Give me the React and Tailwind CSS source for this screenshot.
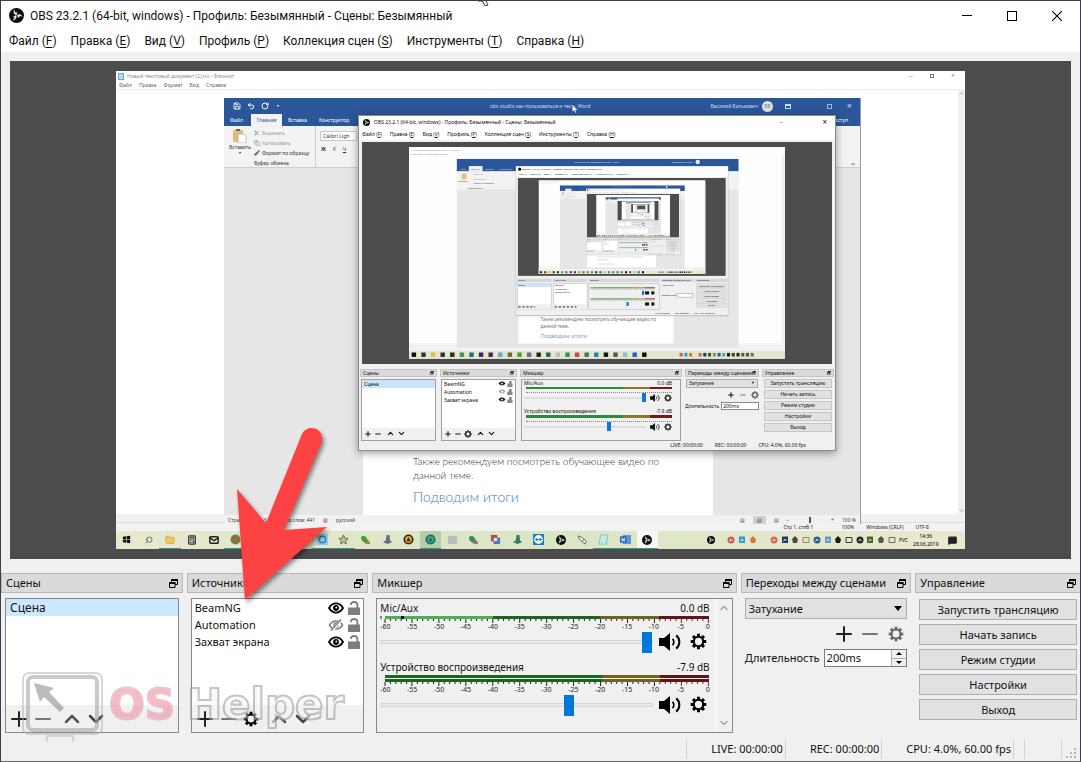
import React, { useState } from 'react';
import { ChevronUp, ChevronDown, Plus, Minus, Undo2, RotateCw, Save, Search, Scissors, Copy, Brush, MessageSquare, Calculator, Mail, Folder } from 'lucide-react';

const MENU = [
  ['Файл', 'F'],
  ['Правка', 'E'],
  ['Вид', 'V'],
  ['Профиль', 'P'],
  ['Коллекция сцен', 'S'],
  ['Инструменты', 'T'],
  ['Справка', 'H'],
];

const TITLE = 'OBS 23.2.1 (64-bit, windows) - Профиль: Безымянный - Сцены: Безымянный';

const SOURCES = [
  { name: 'BeamNG', visible: true },
  { name: 'Automation', visible: false },
  { name: 'Захват экрана', visible: true },
];

const CONTROLS = ['Запустить трансляцию', 'Начать запись', 'Режим студии', 'Настройки', 'Выход'];

const DB = [-60, -55, -50, -45, -40, -35, -30, -25, -20, -15, -10, -5, 0];

const TASKS = [
  { kind: 'win', color: '#111111' },
  { kind: 'search', color: '#333333' },
  { kind: 'folder', color: '#e9b949', open: true },
  { kind: 'calc', color: '#333333' },
  { kind: 'mail', color: '#2b2b2b' },
  { kind: 'ring', color: '#3c9a55', inner: '#d94a3a', open: true },
  { kind: 'box', color: '#1b6f86' },
  { kind: 'box', color: '#3b2470' },
  { kind: 'box', color: '#52206b' },
  { kind: 'cam', color: '#5fa9d6', open: true },
  { kind: 'star', color: '#6b6b3a', open: true },
  { kind: 'leaf', color: '#4c9a3c' },
  { kind: 'cone', color: '#6a6a8c' },
  { kind: 'ring', color: '#2d2414', inner: '#e2a21c' },
  { kind: 'ring', color: '#1d6b5a', inner: '#3fa58a', lit: 'bg-[#b5cda9]', open: true },
  { kind: 'box', color: '#b9bcc4' },
  { kind: 'leaf', color: '#3f8a68' },
  { kind: 'pair', color: '#c5474a', inner: '#5274b8' },
  { kind: 'cone', color: '#3f7a62' },
  { kind: 'viewer', color: '#1f7fc4' },
  { kind: 'obs', color: '#161616' },
  { kind: 'brush', color: '#555555' },
  { kind: 'note', color: '#7cc4cf', open: true },
  { kind: 'word', color: '#2b62b5', open: true },
  { kind: 'obs', color: '#0b0b0b', lit: 'bg-[#f7f8f4]', open: true },
];

const TRAY = [
  '#d2575f', '#2a9fd8', '#cf7c2f', '#e4e4d6', '#e0605a', '#1f3a66', '#4c4c44', '#8a8a78',
  '#2b5f91', '#5b9bc4', '#1c1c1c', '#3d3d30', '#26262a', '#3f6b23', '#555548', '#6b6b5c',
];

/* ---------- icons ---------- */

const Gear = ({ className }) => (
  <svg viewBox="0 0 18 18" className={className} fill="none" stroke="currentColor">
    <circle cx="9" cy="9" r="5" strokeWidth="2.3" />
    {[0, 45, 90, 135, 180, 225, 270, 315].map((a) => (
      <path key={a} d="M9 0.8V3.6" strokeWidth="3.2" transform={`rotate(${a} 9 9)`} />
    ))}
  </svg>
);

const Eye = ({ open }) =>
  open ? (
    <svg viewBox="0 0 16 12" className="h-3 w-4 text-black" fill="none" stroke="currentColor">
      <path d="M1 6C3 2.6 5.3 1.4 8 1.4S13 2.6 15 6C13 9.4 10.7 10.6 8 10.6S3 9.4 1 6Z" strokeWidth="1.8" />
      <circle cx="8" cy="6" r="2.9" fill="currentColor" stroke="none" />
      <circle cx="8.3" cy="5.5" r="0.9" fill="#fff" stroke="none" />
    </svg>
  ) : (
    <svg viewBox="0 0 16 12" className="h-3 w-4 text-[#7d7d7d]" fill="none" stroke="currentColor">
      <path d="M1.4 6C3.2 3.2 5.4 2 8 2S12.8 3.2 14.6 6C12.8 8.8 10.6 10 8 10S3.2 8.8 1.4 6Z" strokeWidth="1.4" />
      <circle cx="8" cy="6" r="2" strokeWidth="1.5" />
      <path d="M3.5 11.8 13.5 0.6" stroke="#fff" strokeWidth="3" />
      <path d="M3 11.4 13 0.4" strokeWidth="1.5" />
    </svg>
  );

const Unlocked = () => (
  <svg viewBox="0 0 12 14" className="h-[14px] w-3 text-[#7d7d7d]" fill="none" stroke="currentColor">
    <path d="M2.8 3.8C3 1.8 4.2 1 6 1C8.2 1 9.4 2.2 9.4 4V7" strokeWidth="1.8" />
    <path d="M0 6.5H12V14H0Z" fill="currentColor" stroke="none" />
  </svg>
);

const Speaker = ({ className }) => (
  <svg viewBox="0 0 22 18" className={className} fill="none" stroke="currentColor">
    <path d="M0 5H5L11 0V18L5 13H0Z" fill="currentColor" stroke="none" />
    <path d="M13.5 5.8C15.2 7.6 15.2 10.4 13.5 12.2" strokeWidth="1.8" />
    <path d="M17.2 2.4C21.4 5.8 21.4 12.2 17.2 15.6" strokeWidth="2" />
  </svg>
);

const Float = ({ className }) => (
  <svg viewBox="0 0 9 9" className={className} fill="none" stroke="currentColor">
    <path d="M2.5 3V0.5H8.5V5.5H6" />
    <path d="M2 1.2H9" strokeWidth="1.6" />
    <path d="M0.5 3.5H6V8.5H0.5Z" />
    <path d="M0 4.2H6.5" strokeWidth="1.6" />
  </svg>
);

const ObsMark = ({ className }) => (
  <svg viewBox="0 0 16 16" className={className} fill="none">
    <circle cx="8" cy="8" r="8" fill="#0c0c0c" />
    {[0, 120, 240].map((a) => (
      <path key={a} d="M8.2 7.4C5.6 7 4.3 4.8 5.7 2.3C5.7 4.2 6.9 5.4 9 5" fill="#e6e6e6" stroke="#e6e6e6" strokeWidth="0.5" transform={`rotate(${a} 8 8)`} />
    ))}
  </svg>
);

const TaskGlyph = ({ t }) => {
  if (t.kind === 'search') return <Search className="size-2 -scale-x-100 text-[#333]" strokeWidth={2} />;
  if (t.kind === 'calc') return <Calculator className="size-[10px] text-[#333]" strokeWidth={3} />;
  if (t.kind === 'mail') return <Mail className="size-[10px] text-[#222]" strokeWidth={3.5} />;
  if (t.kind === 'folder') return <Folder className="size-[10px] fill-[#f0c95c] text-[#d79f35]" strokeWidth={2} />;
  if (t.kind === 'obs') return <ObsMark className="size-[10px]" />;
  return (
    <svg viewBox="0 0 12 12" className="size-[11px]">
      {t.kind === 'win' && <path d="M2 3 5.6 2.5V5.7H2ZM6.2 2.4 10 2V5.7H6.2ZM2 6.3H5.6V9.5L2 9ZM6.2 6.3H10V10L6.2 9.5Z" fill={t.color} />}
      {t.kind === 'ring' && (
        <>
          <circle cx="6" cy="6" r="5.5" fill={t.color} />
          <circle cx="6" cy="6" r="3.8" fill={t.inner} />
          <path d="M6 3.5 8.2 8H3.8Z" fill={t.color} />
        </>
      )}
      {t.kind === 'box' && <path d="M1 2H11V11H1Z" fill={t.color} />}
      {t.kind === 'cam' && (
        <>
          <path d="M0 0H12V12H0Z" fill="#8ec9e6" />
          <circle cx="6" cy="6" r="3.5" fill="none" stroke="#2e7fb4" strokeWidth="1.5" />
        </>
      )}
      {t.kind === 'star' && <path d="M6 1 7.5 4.5 11 5 8.5 7.5 9 11 6 9 3 11 3.5 7.5 1 5 4.5 4.5Z" fill="#b7c19a" stroke={t.color} />}
      {t.kind === 'leaf' && (
        <>
          <path d="M1 3C5 1 7 3 8 6L11 9 6 10C3 9 1 7 1 3Z" fill={t.color} />
          <path d="M6 9H11V11H6Z" fill="#d4722f" />
        </>
      )}
      {t.kind === 'cone' && <path d="M5 1H8L9 7 11 9 6 11 1 9 4 7Z" fill={t.color} />}
      {t.kind === 'pair' && (
        <>
          <path d="M1 1H8V8H1Z" fill={t.color} />
          <path d="M4 4H11V11H4Z" fill={t.inner} />
          <circle cx="6" cy="6" r="2" fill="#f1f1f1" />
        </>
      )}
      {t.kind === 'viewer' && (
        <>
          <path d="M0 0H12V12H0Z" fill={t.color} />
          <circle cx="6" cy="6" r="4.8" fill="#fff" />
          <path d="M1.8 6 4.3 4V5.3H7.7V4L10.2 6 7.7 8V6.7H4.3V8Z" fill={t.color} />
        </>
      )}
      {t.kind === 'brush' && <path d="M1 2 6 4 10 8 9 11 5 8 3 6ZM5 8 8 6" fill="#f1f1ea" stroke={t.color} strokeWidth="0.9" />}
      {t.kind === 'note' && <path d="M3 1H11L9 11H1Z" fill="#c9e8ea" stroke={t.color} />}
      {t.kind === 'word' && (
        <>
          <path d="M3 1H12V11H3Z" fill="#5c96dd" />
          <path d="M0 2.5H7V9.5H0Z" fill={t.color} />
          <path d="M1.5 4 2.5 8 3.5 5 4.5 8 5.5 4" fill="none" stroke="#fff" strokeWidth="0.8" />
        </>
      )}
    </svg>
  );
};

/* ---------- captured desktop ---------- */

// Readable on the first nested level, only a dashed trace further in
const Label = ({ deep, x, y, size = 6, fill = '#222', anchor, children }) => {
  if (!deep) {
    return (
      <text x={x} y={y} fontSize={size} fill={fill} textAnchor={anchor} fontFamily="Noto Sans, sans-serif">
        {children}
      </text>
    );
  }
  const w = children.length * size * 0.5;
  const left = anchor === 'middle' ? x - w / 2 : x;
  return <path d={`M${left} ${y - size * 0.3}h${w}`} stroke={fill} strokeWidth={size * 0.35} strokeDasharray="3 2" opacity="0.6" />;
};

// One level of the "screen inside the screen" feedback
const DesktopArt = ({ level }) => {
  const deep = level > 1;
  return (
    <g>
      <rect width="849" height="478" fill="#fefefe" />
      <Label deep={deep} x={9} y={8} size={5} fill="#8a8a8a">Новый текстовый документ (2).txt – Блокнот</Label>
      <Label deep={deep} x={3} y={17} size={5} fill="#8a8a8a">Файл   Правка   Формат   Вид   Справка</Label>
      <rect x="842" y="19" width="7" height="424" fill="#f0f0f0" />
      <rect y="443" width="849" height="17" fill="#f2f2f2" />

      {/* word processor */}
      <rect x="108" y="27" width="636" height="426" fill="#e6e6e6" />
      <rect x="108" y="27" width="636" height="28" fill="#2a579a" />
      <rect x="135" y="43" width="31" height="12" fill="#f3f3f3" />
      <rect x="108" y="55" width="636" height="41" fill="#f3f3f3" />
      <Label deep={deep} x={374} y={36} size={5} fill="#dce6f5">obs studio как пользоваться и тест - Word</Label>
      <Label deep={deep} x={594} y={36} size={5} fill="#dce6f5">Василий Батькович</Label>
      <Label deep={deep} x={115} y={51} size={5} fill="#dce6f5">Файл</Label>
      <Label deep={deep} x={140} y={51} size={5} fill="#2a579a">Главная</Label>
      <Label deep={deep} x={172} y={51} size={5} fill="#dce6f5">Вставка</Label>
      <Label deep={deep} x={203} y={51} size={5} fill="#dce6f5">Конструктор</Label>
      <circle cx="652" cy="34" r="5" fill="#e8e8e8" />
      <rect x="119" y="60" width="11" height="13" fill="#e8c27a" />
      <Label deep={deep} x={112} y={79} size={5} fill="#444">Вставить</Label>
      <Label deep={deep} x={145} y={64} size={5} fill="#999">Вырезать</Label>
      <Label deep={deep} x={145} y={74} size={5} fill="#999">Копировать</Label>
      <Label deep={deep} x={145} y={84} size={5} fill="#444">Формат по образцу</Label>
      <Label deep={deep} x={133} y={94} size={5} fill="#444">Буфер обмена</Label>
      <rect x="247" y="96" width="350" height="348" fill="#fff" />
      <Label deep={deep} x={297} y={394} size={10} fill="#777">Также рекомендуем посмотреть обучающее видео по</Label>
      <Label deep={deep} x={297} y={408} size={10} fill="#777">данной теме.</Label>
      <Label deep={deep} x={297} y={431} size={13} fill="#7f9fcc">Подводим итоги</Label>

      {/* taskbar */}
      <rect y="460" width="849" height="18" fill="#e3e8cd" />
      {TASKS.map((t, i) => (
        <rect key={i} x={6 + i * 21.68} y="464" width="10" height="10" fill={t.color} />
      ))}
      {TRAY.map((c, i) => (
        <rect key={i} x={611 + i * 10.7} y="465" width="7" height="8" fill={c} />
      ))}

      {/* recorder window */}
      <rect x="241" y="43" width="480" height="339" fill="#b4b4b4" />
      <rect x="242" y="44" width="478" height="336" fill="#f0f0f0" />
      <rect x="242" y="44" width="478" height="24" fill="#fff" />
      <circle cx="250" cy="50" r="3.5" fill="#000" />
      <Label deep={deep} x={255} y={52} size={5}>{TITLE}</Label>
      {MENU.map(([name, key], i) => (
        <Label key={key} deep={deep} x={[246, 273, 305, 329, 367, 421, 469][i]} y={64} size={5}>{`${name} (${key})`}</Label>
      ))}
      <rect x="246" y="70" width="469" height="221" fill="#4c4c4c" />
      {[[243, 79], [324, 78], [405, 161], [570, 74], [646, 73]].map(([x, w]) => (
        <rect key={x} x={x} y="297" width={w} height="8" fill="#d8d8d8" />
      ))}
      <rect x="245" y="308" width="76" height="59" fill="#fff" stroke="#aaa" />
      <rect x="245" y="308" width="76" height="8" fill="#cce4f7" />
      <rect x="326" y="308" width="76" height="59" fill="#fff" stroke="#aaa" />
      <rect x="246" y="355" width="75" height="12" fill="#f0f0f0" />
      <rect x="327" y="355" width="75" height="12" fill="#f0f0f0" />
      <rect x="406" y="308" width="159" height="59" fill="#f0f0f0" stroke="#aaa" />
      <Label deep={deep} x={247} y={303} size={5}>Сцены</Label>
      <Label deep={deep} x={328} y={303} size={5}>Источники</Label>
      <Label deep={deep} x={408} y={303} size={5}>Микшер</Label>
      <Label deep={deep} x={571} y={303} size={5}>Переходы между сценами</Label>
      <Label deep={deep} x={649} y={303} size={5}>Управление</Label>
      <Label deep={deep} x={247} y={314} size={5}>Сцена</Label>
      {SOURCES.map((s, i) => (
        <Label key={s.name} deep={deep} x={329} y={314 + i * 8} size={5}>{s.name}</Label>
      ))}
      <Label deep={deep} x={573} y={315} size={5}>Затухание</Label>
      <Label deep={deep} x={571} y={337} size={5}>Длительность</Label>
      <rect x="605" y="331" width="36" height="8" fill="#fff" stroke="#888" />
      <path d="M247 361H285M329 361H378" stroke="#444" strokeWidth="3" strokeDasharray="5 4" />
      <Label deep={deep} x={556} y={377} size={5}>LIVE: 00:00:00</Label>
      <Label deep={deep} x={600} y={377} size={5}>REC: 00:00:00</Label>
      <Label deep={deep} x={643} y={377} size={5}>CPU: 4.0%, 60.00 fps</Label>
      {[317, 342].map((y, i) => (
        <g key={y}>
          <rect x="410" y={y} width="95" height="2" fill="#2f8a3a" />
          <rect x="505" y={y} width="28" height="2" fill="#8a7a2a" />
          <rect x="533" y={y} width="22" height="2" fill="#6b1c1c" />
          <path d={`M410 ${y + 4}H555`} stroke="#555" strokeDasharray="2 2" />
          <rect x={i ? 491 : 526} y={y + 8} width="5" height="9" fill="#0a78d6" />
          <rect x="533" y={y + 9} width="9" height="7" fill="#111" />
          <rect x="547" y={y + 9} width="7" height="7" fill="#111" />
        </g>
      ))}
      {CONTROLS.map((c, i) => (
        <g key={c}>
          <rect x="649" y={309 + i * 11} width="68" height="9" fill="#e1e1e1" stroke="#adadad" strokeWidth="0.5" />
          <Label deep={deep} x={683} y={316 + i * 11} size={5} anchor="middle">{c}</Label>
        </g>
      ))}
      {level < 5 && (
        <g transform="translate(293 75) scale(0.443)">
          <DesktopArt level={level + 1} />
        </g>
      )}
    </g>
  );
};

const MiniHead = ({ children }) => (
  <div className="flex h-2 items-center justify-between border border-[#c4c4c4] bg-[#dadada] px-[2px]">
    <span className="whitespace-nowrap">{children}</span>
    <Float className="size-1 text-black" />
  </div>
);

const MiniTools = ({ gear }) => (
  <div className="mt-auto flex h-3 items-center gap-[2px] bg-[#f0f0f0] px-[2px]">
    <Plus className="size-2" strokeWidth={3} />
    <Minus className="size-2" strokeWidth={3} />
    {gear && <Gear className="size-2" />}
    <ChevronUp className="ml-[2px] size-[9px]" strokeWidth={3} />
    <ChevronDown className="size-[9px]" strokeWidth={3} />
  </div>
);

const MiniChannel = ({ name, level, db, double }) => (
  <div className="h-[28px] shrink-0">
    <div className="flex h-[7px] items-center justify-between">
      <span>{name}</span>
      <span>{db}</span>
    </div>
    <div className={`ml-[2px] flex ${double ? 'h-[3px]' : 'h-[2px]'}`}>
      <span className="w-2/3 bg-[#2f8a3a]" />
      <span className="w-[18%] bg-[#8a7a2a]" />
      <span className="flex-1 bg-[#6b1c1c]" />
    </div>
    <div className="ml-[2px] h-1 border-b border-dotted border-[#888]" />
    <div className="flex h-[10px] items-center gap-1">
      <div className="relative h-[2px] w-[124px] bg-[#dedede]">
        <span className={`absolute -top-1 h-[9px] w-1 bg-[#0a78d6] ${level}`} />
      </div>
      <Speaker className="h-2 w-[10px]" />
      <Gear className="size-2" />
    </div>
  </div>
);

const MiniObs = () => (
  <div className="absolute left-[242px] top-[44px] flex h-[336px] w-[478px] flex-col border border-[#8c8c8c] bg-[#f0f0f0] px-[1px] text-[5px] leading-[6px] text-[#111] shadow-[0_2px_8px_rgba(0,0,0,0.4)]">
    <div className="-mx-[1px] flex h-3 shrink-0 items-center gap-1 bg-white px-1">
      <ObsMark className="size-[7px]" />
      <span>{TITLE}</span>
      <span className="ml-auto mr-9">–</span>
      <span className="mr-1 text-[8px]">×</span>
    </div>
    <div className="-mx-[1px] flex h-3 shrink-0 items-center gap-2 bg-white px-[3px]">
      {MENU.map(([name, key]) => (
        <span key={key}>{name} (<u>{key}</u>)</span>
      ))}
    </div>
    <div className="mx-[2px] mt-[2px] flex shrink-0 justify-center bg-[#4c4c4c] py-[5px]">
      <svg viewBox="0 0 849 478" className="w-[376px]">
        <DesktopArt level={1} />
      </svg>
    </div>
    <div className="mt-[5px] flex h-[72px] shrink-0 gap-[3px]">
      <div className="flex w-[78px] flex-col gap-[2px]">
        <MiniHead>Сцены</MiniHead>
        <div className="mx-[1px] flex flex-1 flex-col border border-[#a0a0a0] bg-white">
          <span className="bg-[#cce4f7] px-[2px] py-[1px]">Сцена</span>
          <MiniTools />
        </div>
      </div>
      <div className="flex w-[78px] flex-col gap-[2px]">
        <MiniHead>Источники</MiniHead>
        <div className="mx-[1px] flex flex-1 flex-col border border-[#a0a0a0] bg-white">
          {SOURCES.map((s) => (
            <div key={s.name} className="flex h-2 items-center px-[2px]">
              <span className="flex-1">{s.name}</span>
              <svg viewBox="0 0 16 8" className="h-[7px] w-[15px]">
                <path d="M0 4C2 1 6 1 8 4C6 7 2 7 0 4Z" fill={s.visible ? '#222' : '#aaa'} />
                <circle cx="4" cy="4" r="1" fill="#fff" />
                <path d="M10 4H16V8H10ZM12 4V1H15V4" fill="#888" />
              </svg>
            </div>
          ))}
          <MiniTools gear />
        </div>
      </div>
      <div className="flex w-[162px] flex-col gap-[2px]">
        <MiniHead>Микшер</MiniHead>
        <div className="mx-[1px] flex flex-1 flex-col border border-[#a0a0a0] pl-[2px] pr-2">
          <MiniChannel name="Mic/Aux" db="0.0 dB" level="right-0" />
          <MiniChannel name="Устройство воспроизведения" db="-7.9 dB" level="left-[83px]" double />
        </div>
      </div>
      <div className="flex w-[74px] flex-col gap-[2px]">
        <MiniHead>Переходы между сценами</MiniHead>
        <div className="mx-[1px] flex h-[9px] items-center justify-between border border-[#adadad] bg-[#e1e1e1] px-[2px]">
          <span>Затухание</span>
          <span className="text-[4px]">▼</span>
        </div>
        <div className="flex h-[10px] items-center justify-end gap-1">
          <Plus className="size-2" strokeWidth={3} />
          <Minus className="size-2 text-[#777]" strokeWidth={3} />
          <Gear className="size-2 text-[#555]" />
        </div>
        <div className="flex h-2 items-center gap-[2px]">
          <span>Длительность</span>
          <span className="flex-1 border border-[#888] bg-white px-[1px]">200ms</span>
        </div>
      </div>
      <div className="flex w-[73px] flex-col gap-[2px]">
        <MiniHead>Управление</MiniHead>
        {CONTROLS.map((c) => (
          <span key={c} className="mx-[2px] flex h-[9px] items-center justify-center border border-[#c6c6c6] bg-[#e1e1e1]">{c}</span>
        ))}
      </div>
    </div>
    <div className="flex flex-1 items-center justify-end gap-3 pr-7">
      <span>LIVE: 00:00:00</span>
      <span>REC: 00:00:00</span>
      <span>CPU: 4.0%, 60.00 fps</span>
    </div>
  </div>
);

const WordWindow = () => (
  <div className="absolute left-[108px] top-[27px] flex h-[426px] w-[637px] flex-col border-r border-[#9c9c9c] bg-[#e6e6e6] text-[5px] leading-[8px]">
    <div className="flex h-4 shrink-0 items-center bg-[#2a579a] pl-[9px] text-[#cfdcf0]">
      <Save className="size-2 text-white" strokeWidth={2.5} />
      <Undo2 className="ml-[6px] size-2 text-white" strokeWidth={3} />
      <RotateCw className="ml-[6px] size-2 text-white" strokeWidth={3} />
      <span className="ml-2 text-[4px] text-white">▾</span>
      <span className="ml-[211px]">obs studio как пользоваться и тест - Word</span>
      <span className="ml-auto">Василий Батькович</span>
      <span className="ml-1 mr-3 size-[11px] rounded-full bg-[#dfe3e8] text-center leading-[11px] text-[#777]">ВБ</span>
      <span className="mr-9 h-[5px] w-[6px] border border-t-2 border-[#cfdcf0]" />
      <span className="mr-[15px] size-[5px] border border-[#9fb7dc]" />
      <span className="mr-2 text-[9px]">×</span>
    </div>
    <div className="flex h-3 shrink-0 bg-[#2a579a] pl-[6px] leading-[12px] text-white">
      <span className="w-[21px]">Файл</span>
      <span className="w-[31px] bg-[#f3f3f3] text-center text-[#2a579a]">Главная</span>
      <span className="w-[31px] pl-[6px]">Вставка</span>
      <span className="pl-[6px]">Конструктор</span>
      <span className="ml-auto mr-3">оступ</span>
    </div>
    <div className="flex h-[42px] shrink-0 border-b border-[#cfcfcf] bg-[#f3f3f3] text-[#333]">
      <div className="w-[92px] border-r border-[#d0d0d0] pl-1">
        <div className="flex h-[33px] gap-[2px] pt-[3px]">
          <div className="flex w-6 flex-col items-center">
            <svg viewBox="0 0 14 14" className="size-[14px]">
              <path d="M0 1H10V13H0Z" fill="#e3bd74" />
              <path d="M3 0H7V2H3Z" fill="#666" />
              <path d="M5 5H11L13 7V14H5Z" fill="#fff" stroke="#999" strokeWidth="0.6" />
            </svg>
            <span>Вставить</span>
            <span className="text-[4px] leading-[4px]">▾</span>
          </div>
          <div className="flex flex-col gap-[2px]">
            <span className="flex items-center gap-[2px] text-[#a0a0a0]"><Scissors className="size-[6px]" strokeWidth={3} />Вырезать</span>
            <span className="flex items-center gap-[2px] text-[#a0a0a0]"><Copy className="size-[6px]" strokeWidth={3} />Копировать</span>
            <span className="flex items-center gap-[2px]"><Brush className="size-[6px]" strokeWidth={3} />Формат по образцу</span>
          </div>
        </div>
        <div className="text-center">Буфер обмена</div>
      </div>
      <div className="flex flex-col gap-1 pl-[4px] pt-[5px]">
        <span className="w-[37px] border border-[#c8c8c8] bg-white px-[2px]">Calibri Ligh</span>
        <span className="flex gap-[7px] px-[1px]"><b>Ж</b><i>К</i><u>Ч</u></span>
      </div>
      <ChevronUp className="ml-auto mr-1 mt-auto size-[6px]" strokeWidth={3} />
    </div>
    <div className="ml-[139px] min-h-0 w-[350px] flex-1 bg-white px-[50px] pt-[286px] font-['Lato',sans-serif] font-light">
      <p className="whitespace-nowrap text-[10px] leading-[14px] text-[#333]">
        Также рекомендуем посмотреть обучающее видео по
        <br />
        данной теме.
      </p>
      <p className="mt-[6px] text-[14px] leading-[18px] text-[#4a78b5]">Подводим итоги</p>
    </div>
    <div className="flex h-[9px] shrink-0 items-center gap-2 bg-[#f1f1f1] px-1 text-[#444]">
      <span>Страница 3 из 3</span>
      <span className="ml-[2px]">Число слов: 441</span>
      <span>▥</span>
      <span>русский</span>
      <span className="ml-auto">▤</span>
      <span className="bg-[#cfcfcf] px-1">▤</span>
      <span>▤</span>
      <span className="flex items-center gap-[20px]">
        <span>–</span>
        <span className="h-[6px] w-[2px] bg-[#555]" />
        <span>+</span>
      </span>
      <span>100 %</span>
    </div>
  </div>
);

const Taskbar = () => (
  <div className="flex h-[18px] shrink-0 items-center bg-gradient-to-r from-[#e8e8cf] via-[#d8e6c6] to-[#ebe8cf]">
    <div className="flex h-full w-[542px]">
      {TASKS.map((t, i) => (
        <span key={i} className={`flex flex-1 items-center justify-center border-b ${t.open ? 'border-[#2b9c92]' : 'border-transparent'} ${t.lit || ''}`}>
          <TaskGlyph t={t} />
        </span>
      ))}
    </div>
    <ObsMark className="ml-[49px] size-[8px]" />
    <div className="ml-[11px] flex w-[171px]">
      {TRAY.map((c, i) => (
        <span key={i} className="flex flex-1 justify-center">
          <svg viewBox="0 0 8 8" className="size-2">
            {i % 4 === 0 && <circle cx="4" cy="4" r="3.5" fill={c} />}
            {i % 4 === 1 && <path d="M1 0.5H7V7H1Z" fill={c} />}
            {i % 4 === 2 && <path d="M4 0 7 3 6 7H2L1 3Z" fill={c} />}
            {i % 4 === 3 && <path d="M1 1.500H7V6.500H1Z" fill="none" stroke={c} />}
            {i % 4 < 2 && <path d="M2.5 5.5 4 3 5.5 5" stroke="#fff" strokeWidth="0.8" fill="none" />}
          </svg>
        </span>
      ))}
    </div>
    <span className="ml-[2px] text-[5px]">РУС</span>
    <span className="ml-[5px] text-center text-[5px] leading-[8px]">14:36<br />28.06.2019</span>
    <MessageSquare className="ml-auto mr-2 size-[9px] fill-[#222] text-[#222]" strokeWidth={3} />
  </div>
);

const CapturedDesktop = () => (
  <div className="relative flex w-[849px] max-w-full flex-col overflow-hidden bg-white font-['Noto_Sans',sans-serif] text-black">
    <div className="flex h-[10px] shrink-0 items-center gap-[3px] px-[2px] text-[5px] leading-[10px] text-[#8c8c8c]">
      <span className="h-[7px] w-[6px] border border-[#6da7b8] bg-[#bfdde4]" />
      Новый текстовый документ (2).txt – Блокнот
      <span className="ml-auto">—</span>
      <span className="ml-[14px] size-[4px] border border-[#777]" />
      <span className="ml-[14px] mr-2 text-[7px]">×</span>
    </div>
    <div className="flex h-[9px] shrink-0 items-center gap-[7px] border-b border-[#ececec] px-[3px] text-[5px] text-[#666]">
      {['Файл', 'Правка', 'Формат', 'Вид', 'Справка'].map((m) => (
        <span key={m}>{m}</span>
      ))}
    </div>
    <div className="flex flex-1 justify-end">
      <div className="flex w-[7px] flex-col justify-between bg-[#f0f0f0]">
        <ChevronUp className="size-[7px] text-[#777]" />
        <ChevronDown className="size-[7px] text-[#777]" />
      </div>
    </div>
    <div className="h-2 shrink-0 bg-[#f0f0f0]" />
    <div className="flex h-[9px] shrink-0 items-center justify-end gap-[12px] border-t border-[#dcdcdc] bg-[#f2f2f2] pr-[36px] text-[5px] text-[#222]">
      <span className="mr-4">Стр 1, стлб 1</span>
      <span>100%</span>
      <span>Windows (CRLF)</span>
      <span>UTF-8</span>
    </div>
    <Taskbar />
    <WordWindow />
    <MiniObs />
    <svg viewBox="0 0 8 12" className="absolute left-[456px] top-[34px] h-2 w-[6px]">
      <path d="M0 0V10L2.5 8 4.5 12 6 11 4.5 7.5H8Z" fill="#fff" stroke="#555" strokeWidth="0.5" />
    </svg>
  </div>
);

/* ---------- docks ---------- */

const Dock = ({ title, children }) => (
  <section className="relative flex min-w-0 flex-col">
    <header className="flex h-5 items-center justify-between border border-[#b8b8b8] bg-[#dadada] pl-1 pr-1">
      <h2 className="whitespace-nowrap">{title}</h2>
      <button type="button" aria-label={`Открепить: ${title}`}>
        <Float className="size-[9px] text-black" />
      </button>
    </header>
    <div className="flex flex-1 flex-col px-1 pt-[5px]">{children}</div>
  </section>
);

const ListTools = ({ gear }) => (
  <div className="mt-auto flex h-[27px] items-center bg-[#f0f0f0] pl-[1px] text-[#222]">
    <button type="button" aria-label="Добавить"><Plus className="size-6" strokeWidth={2} /></button>
    <button type="button" aria-label="Удалить" className="text-[#777]"><Minus className="size-6" strokeWidth={2} /></button>
    {gear && <button type="button" aria-label="Свойства" className="ml-[2px] text-black"><Gear className="size-4" /></button>}
    <button type="button" aria-label="Выше" className={`text-[#555] ${gear ? 'ml-[8px]' : 'ml-[5px]'}`}><ChevronUp className="size-6" strokeWidth={2.5} /></button>
    <button type="button" aria-label="Ниже" className="text-[#444]"><ChevronDown className="size-6" strokeWidth={2.5} /></button>
  </div>
);

const Scale = () => (
  <>
    <svg className="ml-[5px] block h-1 w-[calc(100%-6px)] overflow-visible">
      {Array.from({ length: 61 }, (_, i) => (
        <line
          key={i}
          x1={`${(i / 60) * 100}%`}
          x2={`${(i / 60) * 100}%`}
          y1="0"
          y2={i % 5 === 0 ? 4 : 2}
          stroke={i > 51 ? '#7a1f1f' : '#222'}
        />
      ))}
    </svg>
    <div className="ml-[5px] mr-[2px] flex h-2 justify-between text-[7px] leading-[8px] text-[#222]">
      {DB.map((v) => (
        <span key={v} className="flex w-0 justify-center">{v}</span>
      ))}
    </div>
  </>
);

const Channel = ({ id, name, db, live, value }) => {
  const [volume, setVolume] = useState(value);
  return (
    <div>
      <div className="flex h-4 items-center justify-between text-[10px]">
        <label htmlFor={id}>{name}</label>
        <span>{db}</span>
      </div>
      {live ? (
        <div className="mr-[1px] flex h-[3px]">
          <span className="mr-[3px] w-[2px] bg-[#4cb050]" />
          <span className="w-[16px] bg-[#4cb050]" />
          <span className="w-[3px] bg-black" />
          <span className="w-[27%] bg-[#4cb050]" />
          <span className="flex-1 bg-[#1b641d]" />
          <span className="w-[18%] bg-[#6e6320]" />
          <span className="w-[15%] bg-[#5e1418]" />
        </div>
      ) : (
        <div className="ml-[5px] mr-[1px] flex h-[7px] flex-col gap-[1px]">
          {[0, 1].map((ch) => (
            <div key={ch} className="flex flex-1">
              <span className="flex-1 bg-[#1b641d]" />
              <span className="w-[18%] bg-[#6e6320]" />
              <span className="w-[15%] bg-[#5e1418]" />
            </div>
          ))}
        </div>
      )}
      <Scale />
      <div className="flex h-[21px] items-center">
        <input
          id={id}
          type="range"
          min="0"
          max="100"
          value={volume}
          onChange={(e) => setVolume(Number(e.target.value))}
          className="h-[21px] min-w-0 flex-1 appearance-none bg-transparent [&::-webkit-slider-runnable-track]:h-1 [&::-webkit-slider-runnable-track]:border [&::-webkit-slider-runnable-track]:border-[#d6d6d6] [&::-webkit-slider-runnable-track]:bg-[#e7eaea] [&::-webkit-slider-thumb]:mt-[-9px] [&::-webkit-slider-thumb]:h-[21px] [&::-webkit-slider-thumb]:w-[10px] [&::-webkit-slider-thumb]:appearance-none [&::-webkit-slider-thumb]:bg-[#0078d7]"
        />
        <button type="button" aria-label="Звук" className="ml-[6px]"><Speaker className="h-[18px] w-[22px] text-black" /></button>
        <button type="button" aria-label="Настройки канала" className="ml-[9px] mr-[3px]"><Gear className="size-[17px] text-black" /></button>
      </div>
    </div>
  );
};

const Pointer = () => (
  <svg viewBox="0 0 110 190" className="pointer-events-none absolute bottom-[130px] left-[41px] z-10 h-[190px] w-[110px] drop-shadow-[2px_3px_2px_rgba(0,0,0,0.45)]">
    <path d="M74 21C80 9 99 16 93 31L56 117 99 114 17 187 9 76 38 110Z" fill="#fc4242" />
  </svg>
);

const Watermark = () => (
  <div className="pointer-events-none absolute left-[22px] top-[99px] z-10 flex items-start opacity-60">
    <svg viewBox="0 0 82 70" className="h-[70px] w-[82px]" fill="none">
      <rect x="1" y="1" width="79" height="61" rx="6" stroke="#a8a8a8" strokeWidth="1.5" />
      <rect x="6" y="5" width="69" height="53" rx="5" stroke="#a8a8a8" strokeWidth="4" />
      <path d="M25 70V64H51V70" stroke="#b5b5b5" strokeWidth="1.5" />
      <path d="M12 11 32 16 27 20 42 36 38 40 22 25 18 30Z" fill="#8e8e8e" />
    </svg>
    <span className="ml-[5px] mt-[10px] flex gap-3 font-['DejaVu_Sans',sans-serif] text-[42px] font-bold leading-[46px]">
      <span className="text-[#ef8fa6] [-webkit-text-stroke:2px_#e0a0b0]">OS</span>
      <span className="text-[#f6f6f6] [-webkit-text-stroke:2px_#9d9d9d]">Helper</span>
    </span>
  </div>
);

const App = () => {
  const [transition, setTransition] = useState('fade');
  const [duration, setDuration] = useState(200);

  return (
    <div className="relative flex min-h-screen flex-col overflow-hidden border-x border-b border-t border-[#3b3d48] border-b-[#666] bg-[#f0f0f0] font-['Noto_Sans',sans-serif] text-[11px] leading-4 text-[#111]">
      <svg viewBox="0 0 12 5" className="absolute left-[477px] top-0 h-[5px] w-3">
        <path d="M0 0 3 0 5 1 7 5 10 4 8 0" fill="#fff" stroke="#333" />
      </svg>

      <header className="flex h-[29px] shrink-0 items-center bg-white pl-2 font-['Roboto',sans-serif] text-[12px]">
        <ObsMark className="size-[15px]" />
        <h1 className="ml-[6px] whitespace-nowrap">{TITLE}</h1>
        <div className="ml-auto flex">
          <button type="button" aria-label="Свернуть" className="flex h-[29px] w-[45px] items-center justify-center">
            <span className="h-[1px] w-[10px] bg-black" />
          </button>
          <button type="button" aria-label="Развернуть" className="flex h-[29px] w-[45px] items-center justify-center">
            <span className="size-[10px] border border-black" />
          </button>
          <button type="button" aria-label="Закрыть" className="flex h-[29px] w-[46px] items-center justify-center">
            <svg viewBox="0 0 10 10" className="size-[10px]" stroke="#000" strokeWidth="1.1"><path d="M0 0 10 10M10 0 0 10" /></svg>
          </button>
        </div>
      </header>

      <nav className="flex h-[22px] shrink-0 items-center gap-[14px] whitespace-nowrap bg-white pl-2 font-['Roboto',sans-serif] text-[12px]">
        {MENU.map(([name, key]) => (
          <button key={key} type="button">
            {name} (<span className="underline underline-offset-2">{key}</span>)
          </button>
        ))}
      </nav>

      <main className="mx-[9px] mt-[9px] flex min-h-[498px] flex-1 justify-center bg-[#4c4c4c] py-[10px]">
        <CapturedDesktop />
      </main>

      <div className="relative -mx-[1px] mt-[14px] grid h-[160px] shrink-0 grid-cols-[182fr_182fr_365fr_171fr_166fr] gap-1 pl-[1px]">
        <Dock title="Сцены">
          <div className="flex h-[135px] flex-col border border-[#828790] bg-white">
            <ul>
              <li className="bg-[#cce8ff] px-1 text-[12px] leading-[17px]">Сцена</li>
            </ul>
            <ListTools />
          </div>
        </Dock>

        <Dock title="Источники">
          <Pointer />
          <div className="flex h-[135px] flex-col border border-[#828790] bg-white">
            <ul>
              {SOURCES.map((s) => (
                <li key={s.name} className="flex h-[17px] items-center gap-[4px] pl-[3px] pr-[3px]">
                  <span className="flex-1">{s.name}</span>
                  <button type="button" aria-label="Видимость"><Eye open={s.visible} /></button>
                  <button type="button" aria-label="Блокировка"><Unlocked /></button>
                </li>
              ))}
            </ul>
            <ListTools gear />
          </div>
        </Dock>

        <Dock title="Микшер">
          <div className="flex h-[135px] border border-[#828790]">
            <div className="flex min-w-0 flex-1 flex-col gap-[7px] border-r border-white pl-[3px] pr-[5px] pt-[1px]">
              <Channel id="mic" name="Mic/Aux" db="0.0 dB" live value={100} />
              <Channel id="desktop" name="Устройство воспроизведения" db="-7.9 dB" value={70} />
            </div>
            <div className="flex w-4 flex-col items-center justify-between py-[3px] text-[#a6a6a6]">
              <ChevronUp className="size-3" strokeWidth={3} />
              <ChevronDown className="size-3" strokeWidth={3} />
            </div>
          </div>
        </Dock>

        <Dock title="Переходы между сценами">
          <div className="relative">
            <select
              aria-label="Переход"
              value={transition}
              onChange={(e) => setTransition(e.target.value)}
              className="h-[21px] w-full appearance-none border border-[#adadad] bg-[#e1e1e1] px-[3px]"
            >
              <option value="fade">Затухание</option>
              <option value="cut">Обрыв</option>
            </select>
            <svg viewBox="0 0 8 5" className="pointer-events-none absolute right-[5px] top-2 h-[5px] w-2"><path d="M0 0H8L4 5Z" /></svg>
          </div>
          <div className="mt-[3px] flex h-6 items-center justify-end gap-[2px] pr-[3px] text-[#222]">
            <button type="button" aria-label="Добавить переход"><Plus className="size-6" strokeWidth={2} /></button>
            <button type="button" aria-label="Удалить переход" className="text-[#777]"><Minus className="size-6" strokeWidth={2} /></button>
            <button type="button" aria-label="Свойства перехода" className="ml-1 text-[#666]"><Gear className="size-4" /></button>
          </div>
          <div className="mt-[3px] flex items-center gap-1">
            <label htmlFor="duration">Длительность</label>
            <div className="flex h-[18px] min-w-0 flex-1 border border-[#7a7a7a] bg-white">
              <input id="duration" type="text" readOnly value={`${duration}ms`} className="min-w-0 flex-1 px-[2px] leading-4" />
              <div className="flex w-[15px] flex-col border-l border-[#adadad] bg-[#f0f0f0]">
                <button type="button" aria-label="Больше" className="flex flex-1 items-center justify-center border-b border-[#adadad]" onClick={() => setDuration(duration + 50)}>
                  <svg viewBox="0 0 6 3" className="h-[3px] w-[6px]"><path d="M0 3H6L3 0Z" /></svg>
                </button>
                <button type="button" aria-label="Меньше" className="flex flex-1 items-center justify-center" onClick={() => setDuration(Math.max(50, duration - 50))}>
                  <svg viewBox="0 0 6 3" className="h-[3px] w-[6px]"><path d="M0 0H6L3 3Z" /></svg>
                </button>
              </div>
            </div>
          </div>
        </Dock>

        <Dock title="Управление">
          <div className="flex flex-col gap-1 pt-[1px]">
            {CONTROLS.map((c) => (
              <button key={c} type="button" className="h-[21px] whitespace-nowrap border border-[#adadad] bg-[#e1e1e1]">{c}</button>
            ))}
          </div>
        </Dock>

        <Watermark />
      </div>

      <footer className="mt-1 flex h-6 shrink-0 items-center justify-end whitespace-nowrap">
        <span className="flex h-5 items-center border-l border-[#d2d2d2] pl-6 pr-[2px]">LIVE: 00:00:00</span>
        <span className="flex h-5 items-center border-l border-[#d2d2d2] pl-6 pr-[2px]">REC: 00:00:00</span>
        <span className="flex h-5 items-center border-x border-[#d2d2d2] pl-6 pr-[2px]">CPU: 4.0%, 60.00 fps</span>
        <span className="ml-[10px] h-5 w-[38px] border-x border-[#d2d2d2]" />
        <svg viewBox="0 0 10 10" className="mb-[3px] ml-1 mr-1 mt-auto size-[10px]" fill="#b5b5b5">
          <path d="M8 0H10V2H8ZM8 4H10V6H8ZM8 8H10V10H8ZM4 4H6V6H4ZM4 8H6V10H4ZM0 8H2V10H0Z" />
        </svg>
      </footer>
    </div>
  );
};

export default App;
